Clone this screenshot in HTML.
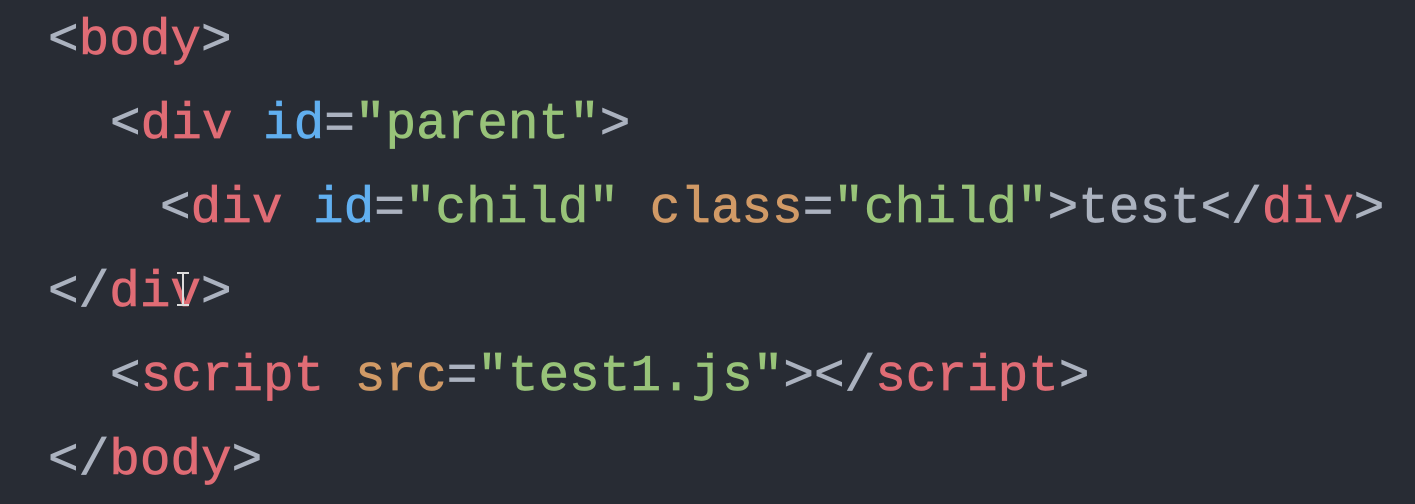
<!DOCTYPE html>
<html><head><meta charset="utf-8"><style>
html,body{margin:0;padding:0;background:#282c34;width:1415px;height:495px;overflow:hidden}
.l{position:absolute;left:0;white-space:pre;font-family:"Liberation Mono",monospace;font-size:51px;line-height:84px;color:#abb2bf;-webkit-text-stroke:0.7px currentColor}
.t{color:#e06c75}.a{color:#61afef}.o{color:#d19a66}.s{color:#98c379}
.cur{position:absolute;left:182px;top:272px;width:2px;height:34px;background:#ddd}
.cur:before,.cur:after{content:"";position:absolute;left:-5px;width:12px;height:2px;background:#ddd}
.cur:before{top:0}.cur:after{bottom:0}
</style></head><body>
<div class="l" style="top:0;left:48px">&lt;<span class="t">body</span>&gt;</div>
<div class="l" style="top:84px;left:110px">&lt;<span class="t">div</span> <span class="a">id</span>=<span class="s">"parent"</span>&gt;</div>
<div class="l" style="top:168px;left:160px">&lt;<span class="t">div</span> <span class="a">id</span>=<span class="s">"child"</span> <span class="o">class</span>=<span class="s">"child"</span>&gt;test&lt;/<span class="t">div</span>&gt;</div>
<div class="l" style="top:252px;left:48px">&lt;/<span class="t">div</span>&gt;</div>
<div class="l" style="top:336px;left:110px">&lt;<span class="t">script</span> <span class="o">src</span>=<span class="s">"test1.js"</span>&gt;&lt;/<span class="t">script</span>&gt;</div>
<div class="l" style="top:420px;left:48px">&lt;/<span class="t">body</span>&gt;</div>
<div class="cur"></div>
</body></html>
